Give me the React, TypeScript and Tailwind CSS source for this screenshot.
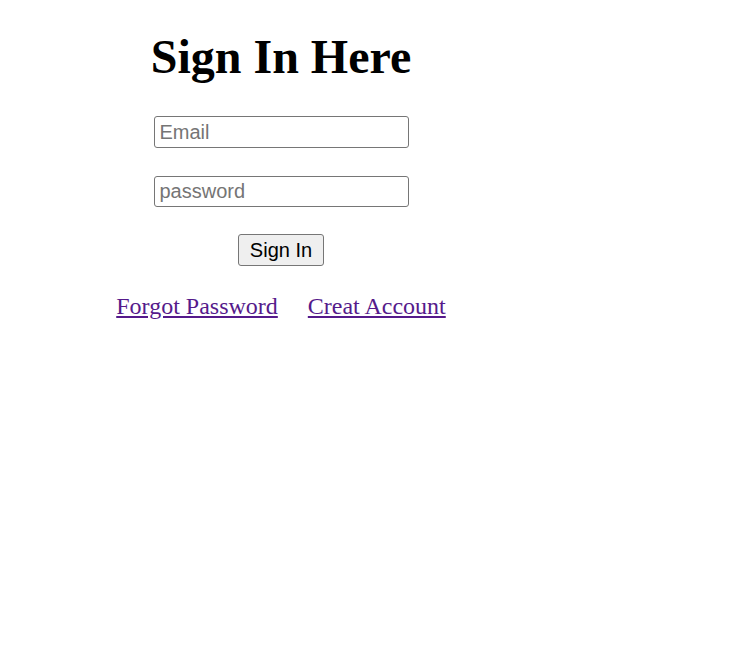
import React from "react";

export default function App() {
  return (
    <div className="min-h-[648px] w-full bg-white">
      <div className="flex w-[562px] flex-col items-center">
        <h1 className="mt-[30px] font-['Liberation_Serif','Times_New_Roman',serif] text-[48px] font-bold leading-[53px] text-black">
          Sign In Here
        </h1>
        <input
          type="email"
          placeholder="Email"
          className="mt-[33px] box-border h-[32px] w-[255px] rounded-[3px] border border-[#767676] bg-white px-[5px] font-['Liberation_Sans',Arial,sans-serif] text-[20px] text-black outline-none placeholder:text-[#757575]"
        />
        <input
          type="password"
          placeholder="password"
          className="mt-[28px] box-border h-[31px] w-[255px] rounded-[3px] border border-[#767676] bg-white px-[5px] font-['Liberation_Sans',Arial,sans-serif] text-[20px] text-black outline-none placeholder:text-[#757575]"
        />
        <button
          type="button"
          className="mt-[27px] box-border h-[32px] w-[86px] rounded-[3px] border border-[#767676] bg-[#efefef] font-['Liberation_Sans',Arial,sans-serif] text-[20px] leading-none text-black"
        >
          Sign In
        </button>
        <div className="mt-[27px] flex gap-[30px] font-['Liberation_Serif','Times_New_Roman',serif] text-[24px] leading-[27px]">
          <a href="#" className="text-[#551a8b] underline">
            Forgot Password
          </a>
          <a href="#" className="text-[#551a8b] underline">
            Creat Account
          </a>
        </div>
      </div>
    </div>
  );
}
